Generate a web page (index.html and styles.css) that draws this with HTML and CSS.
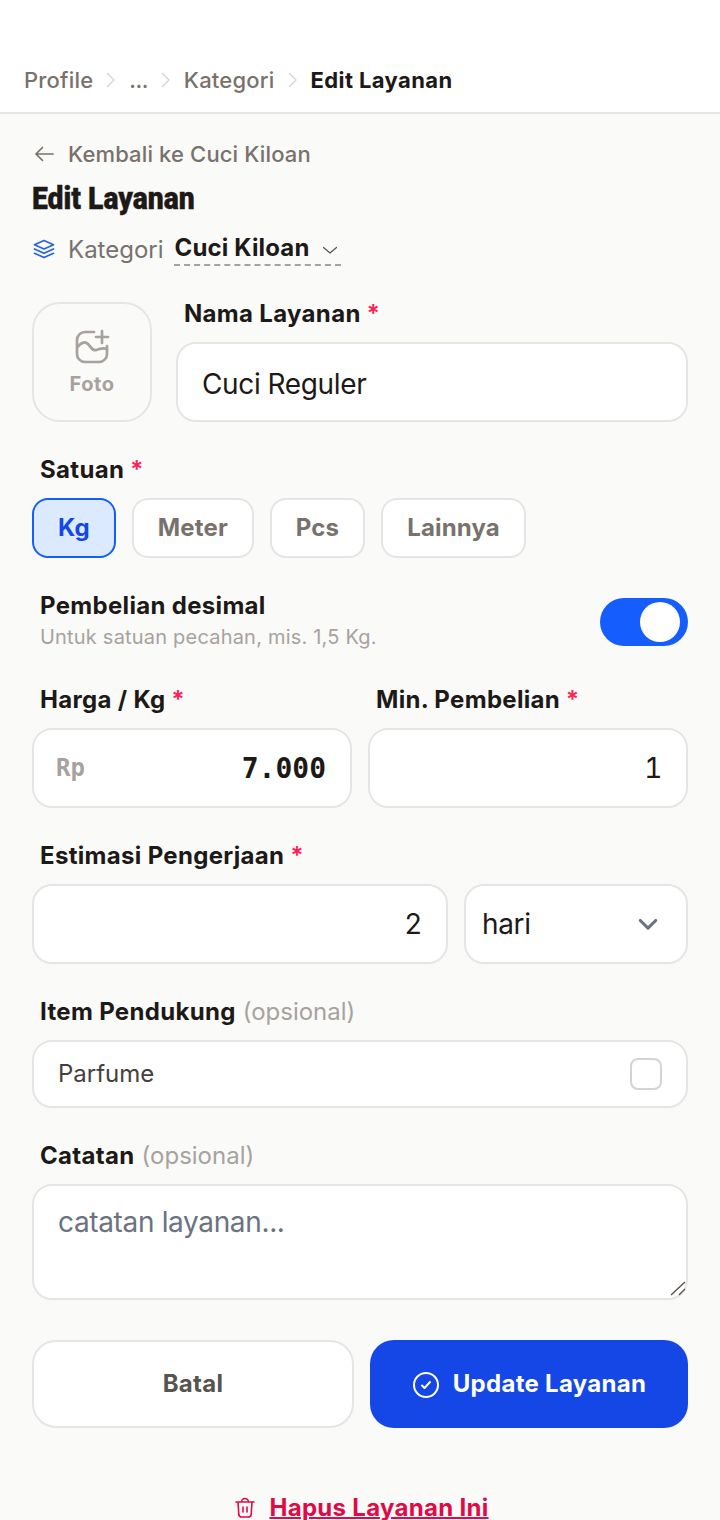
FILE: index.html
```html
<!DOCTYPE html>
<html lang="id">
<head>
<meta charset="utf-8">
<title>Edit Layanan</title>
<link rel="stylesheet" href="styles.css">
</head>
<body>
<header class="topbar">
  <nav class="crumbs">
    <span>Profile</span>
    <svg class="crumb-sep" viewBox="0 0 12 16"><path d="M2.500 1.500L9 8l-6.500 6.500"/></svg>
    <span class="crumb-dots">...</span>
    <svg class="crumb-sep" viewBox="0 0 12 16"><path d="M2.500 1.500L9 8l-6.500 6.500"/></svg>
    <span>Kategori</span>
    <svg class="crumb-sep" viewBox="0 0 12 16"><path d="M2.500 1.500L9 8l-6.500 6.500"/></svg>
    <span class="crumb-current">Edit Layanan</span>
  </nav>
</header>
<main class="page">
  <a class="back"><svg viewBox="0 0 24 24"><path d="M21 12H4M10.500 5.500L4 12l6.500 6.500"/></svg>Kembali ke Cuci Kiloan</a>
  <h1 class="title"><span>Edit Layanan</span></h1>
  <div class="category">
    <svg class="layers" viewBox="0 0 24 24"><path d="M12 3.500l9.500 4.200L12 12 2.500 7.700z"/><path d="M2.500 12L12 16.300 21.500 12"/><path d="M2.500 16.300L12 20.500l9.500-4.200"/></svg>
    <span class="cat-label">Kategori</span>
    <span class="cat-pick">Cuci Kiloan<svg viewBox="0 0 16 16"><path d="M1.500 5.500L8 11l6.500-5.500"/></svg></span>
  </div>

  <section class="name-row">
    <div class="photo">
      <svg viewBox="0 0 36 36"><path d="M20 3H11a8 8 0 0 0-8 8v14a8 8 0 0 0 8 8h14a8 8 0 0 0 8-8v-8"/><path d="M3.500 18c4-5 8-6 11-2.500s4 6.500 8 5.500 6-3 10.500-1"/><path d="M28 2v12M22 8h12"/></svg>
      <span>Foto</span>
    </div>
    <div class="name-field">
      <label class="label name-label">Nama Layanan <b>*</b></label>
      <input class="input name-input" type="text" value="Cuci Reguler">
    </div>
  </section>

  <label class="label satuan-label">Satuan <b>*</b></label>
  <div class="chips">
    <span class="chip active">Kg</span>
    <span class="chip">Meter</span>
    <span class="chip">Pcs</span>
    <span class="chip">Lainnya</span>
  </div>

  <div class="decimal">
    <div>
      <div class="label">Pembelian desimal</div>
      <div class="hint">Untuk satuan pecahan, mis. 1,5 Kg.</div>
    </div>
    <span class="toggle"><i></i></span>
  </div>

  <div class="two-col">
    <div>
      <label class="label inset">Harga / Kg <b>*</b></label>
      <div class="input price"><span class="rp">Rp</span><span class="amount">7.000</span></div>
    </div>
    <div>
      <label class="label inset">Min. Pembelian <b>*</b></label>
      <input class="input right" type="text" value="1">
    </div>
  </div>

  <label class="label inset est-label">Estimasi Pengerjaan <b>*</b></label>
  <div class="est-row">
    <input class="input right" type="text" value="2">
    <div class="input unit">hari<svg viewBox="0 0 20 20"><path d="M4.500 7.500L10 13l5.500-5.500"/></svg></div>
  </div>

  <label class="label inset item-label">Item Pendukung <em>(opsional)</em></label>
  <div class="item-box">Parfume<span class="check"></span></div>

  <label class="label inset note-label">Catatan <em>(opsional)</em></label>
  <div class="note-wrap">
    <textarea class="note" placeholder="catatan layanan..."></textarea>
    <svg class="grip" viewBox="0 0 16 16"><path d="M1 15L15 2M9 15l6-6"/></svg>
  </div>

  <div class="actions">
    <button class="btn cancel" type="button">Batal</button>
    <button class="btn save" type="button"><svg viewBox="0 0 28 28"><circle cx="14" cy="14" r="12"/><path d="M10 14.500l2.500 2.500 5.500-6"/></svg><span>Update Layanan</span></button>
  </div>

  <div class="delete">
    <svg viewBox="0 0 24 24"><path d="M3 6h18M8.500 6a3.500 3.500 0 0 1 7 0M5 6l.8 12.500A3 3 0 0 0 8.800 21h6.400a3 3 0 0 0 3-2.500L19 6M10 11v5M14 11v5"/></svg>
    <a>Hapus Layanan Ini</a>
  </div>
</main>
</body>
</html>
```
FILE: styles.css
```css
* { box-sizing: border-box; }
html, body { margin: 0; padding: 0; }
body {
  height: 1520px;
  overflow: hidden;
  background: #fafaf9;
  color: #1c1917;
  font-family: Inter, "Liberation Sans", sans-serif;
}
svg { fill: none; stroke: currentColor; stroke-linecap: round; stroke-linejoin: round; display: block; flex: none; }

.topbar {
  height: 114px;
  background: #fff;
  border-bottom: 2px solid #e7e5e4;
  padding: 64px 24px 0;
}
.crumbs { display: flex; align-items: center; height: 32px; font-size: 22px; font-weight: 500; color: #78716c; letter-spacing: 0.2px; }
.crumb-sep { width: 12px; height: 16px; margin: 0 12px; color: #d6d3d1; stroke-width: 1.300; }
.crumb-dots { letter-spacing: -0.5px; }
.crumb-current { color: #1c1917; font-weight: 700; letter-spacing: 0.4px; }

.page { padding: 24px 32px 0; }

.back { display: flex; align-items: center; height: 32px; font-size: 22px; font-weight: 500; color: #78716c; letter-spacing: 0.14px; }
.back svg { width: 24px; height: 24px; margin-right: 12px; stroke-width: 1.700; }

.title { margin: 12px 0 0; height: 32px; line-height: 32px; font-family: Roboto, sans-serif; font-size: 32px; font-weight: 900; }
.title span { display: inline-block; transform: scaleX(0.885); transform-origin: left center; white-space: nowrap; -webkit-text-stroke: 0.4px #1c1917; }

.category { display: flex; align-items: center; height: 40px; margin-top: 15px; font-size: 24px; }
.layers { width: 24px; height: 24px; margin-right: 12px; color: #2563eb; stroke-width: 1.700; }
.cat-label { color: #78716c; font-weight: 400; margin-right: 10px; }
.cat-pick { display: flex; align-items: center; align-self: flex-start; height: 37px; padding: 2px 0 0 1px; border-bottom: 2px dashed #a8a29e; font-weight: 700; letter-spacing: 0.15px; color: #1c1917; }
.cat-pick svg { width: 16px; height: 16px; margin: 4px 3px 0 13px; stroke-width: 1.200; color: #57534e; }

.label { display: block; font-size: 24px; line-height: 32px; font-weight: 700; letter-spacing: 0.32px; color: #1c1917; }
.label b { color: #ff2056; font-weight: 600; }
.label em { font-style: normal; font-weight: 400; letter-spacing: 0; margin-left: 1px; color: #a8a29e; }
.inset { padding-left: 8px; }

.input {
  display: block;
  width: 100%;
  height: 80px;
  padding: 0 24px;
  border: 2px solid #e7e5e4;
  border-radius: 20px;
  background: #fff;
  color: #1c1917;
  font-family: Inter, sans-serif;
  font-size: 28px;
  letter-spacing: -0.35px;
  font-variant-numeric: tabular-nums;
  outline: none;
}
.right { text-align: right; }

.name-row { display: flex; gap: 24px; margin-top: 33px; }
.photo {
  width: 120px; height: 120px; flex: none;
  display: flex; flex-direction: column; align-items: center; justify-content: center;
  border: 2px solid #e7e5e4; border-radius: 28px;
  color: #a8a29e; font-size: 20px; font-weight: 700; letter-spacing: 0.6px;
}
.photo svg { width: 36px; height: 36px; margin-bottom: 7px; stroke-width: 2.700; }
.name-field { flex: 1; }
.name-label { padding-left: 8px; margin: -4px 0 12px; }
.name-input { padding-top: 3px; }

.satuan-label { margin: 32px 0 0 8px; }
.chips { display: flex; gap: 16px; margin-top: 12px; }
.chip {
  display: flex; align-items: center; height: 60px; padding: 0 24px 2px;
  border: 2px solid #e7e5e4; border-radius: 16px; background: #fff;
  color: #78716c; font-size: 24px; font-weight: 700; letter-spacing: 0.15px;
}
.chip.active { background: #dbeafe; border-color: #155dfc; color: #1447e6; }

.decimal { display: flex; justify-content: space-between; align-items: center; margin-top: 32px; padding-left: 8px; }
.hint { font-size: 20px; line-height: 30px; margin-bottom: 2px; letter-spacing: 0.2px; color: #a8a29e; }
.toggle { width: 88px; height: 48px; border-radius: 24px; background: #155dfc; display: flex; align-items: center; justify-content: flex-end; padding-right: 8px; }
.toggle i { width: 40px; height: 40px; border-radius: 50%; background: #fff; }

.two-col { display: grid; grid-template-columns: 320px 320px; gap: 16px; margin-top: 30px; }
.two-col .label { margin-bottom: 12px; }
.price { display: flex; justify-content: space-between; align-items: center; padding-left: 22px; }
.rp { color: #a8a29e; font-family: "DejaVu Sans Mono", monospace; font-size: 24px; font-weight: 700; letter-spacing: 0; }
.amount { font-family: "DejaVu Sans Mono", monospace; font-size: 28px; font-weight: 700; letter-spacing: 0; }

.est-label { margin-top: 32px; }
.est-row { display: grid; grid-template-columns: 416px 224px; gap: 16px; margin-top: 12px; }
.unit { display: flex; justify-content: space-between; align-items: center; padding: 0 24px 0 16px; }
.unit svg { width: 28px; height: 28px; color: #6b7280; stroke-width: 2.200; }

.item-label { margin-top: 32px; }
.item-box {
  display: flex; justify-content: space-between; align-items: center;
  height: 68px; margin-top: 12px; padding: 0 24px;
  border: 2px solid #e7e5e4; border-radius: 20px; background: #fff;
  font-size: 24px; line-height: 28px; color: #44403c;
}
.check { width: 32px; height: 32px; border: 2px solid #d6d3d1; border-radius: 8px; background: #fff; }

.note-label { margin-top: 32px; }
.note-wrap { position: relative; margin-top: 12px; }
.note {
  display: block; width: 100%; height: 116px; padding: 18px 24px; resize: none;
  border: 2px solid #e7e5e4; border-radius: 20px; background: #fff; outline: none;
  font-family: Inter, sans-serif; font-size: 28px; line-height: 36px; letter-spacing: -0.35px; color: #1c1917;
}
.note::placeholder { color: #6b7280; opacity: 1; }
.grip { position: absolute; right: 2px; bottom: 4px; width: 16px; height: 16px; color: #57534e; stroke-width: 1.400; stroke-linecap: butt; }

.actions { display: grid; grid-template-columns: 322px 318px; gap: 16px; margin-top: 40px; }
.btn {
  display: flex; align-items: center; justify-content: center; gap: 13px;
  height: 88px; padding-bottom: 2px; border-radius: 24px; font-family: Inter, sans-serif; font-size: 24px; font-weight: 700; letter-spacing: 0.3px;
}
.cancel { background: #fff; border: 2px solid #e7e5e4; color: #57534e; }
.save { background: #1447e6; border: 0; color: #fff; }
.save svg { width: 28px; height: 28px; margin-top: 2px; stroke-width: 2; }

.delete { display: flex; justify-content: center; align-items: center; gap: 12px; margin-top: 64px; padding-left: 2px; color: #df0a46; font-size: 24px; font-weight: 700; letter-spacing: 0.3px; line-height: 32px; }
.delete svg { width: 24px; height: 24px; stroke-width: 1.600; }
.delete a { text-decoration: underline; text-decoration-thickness: 2px; }
```
